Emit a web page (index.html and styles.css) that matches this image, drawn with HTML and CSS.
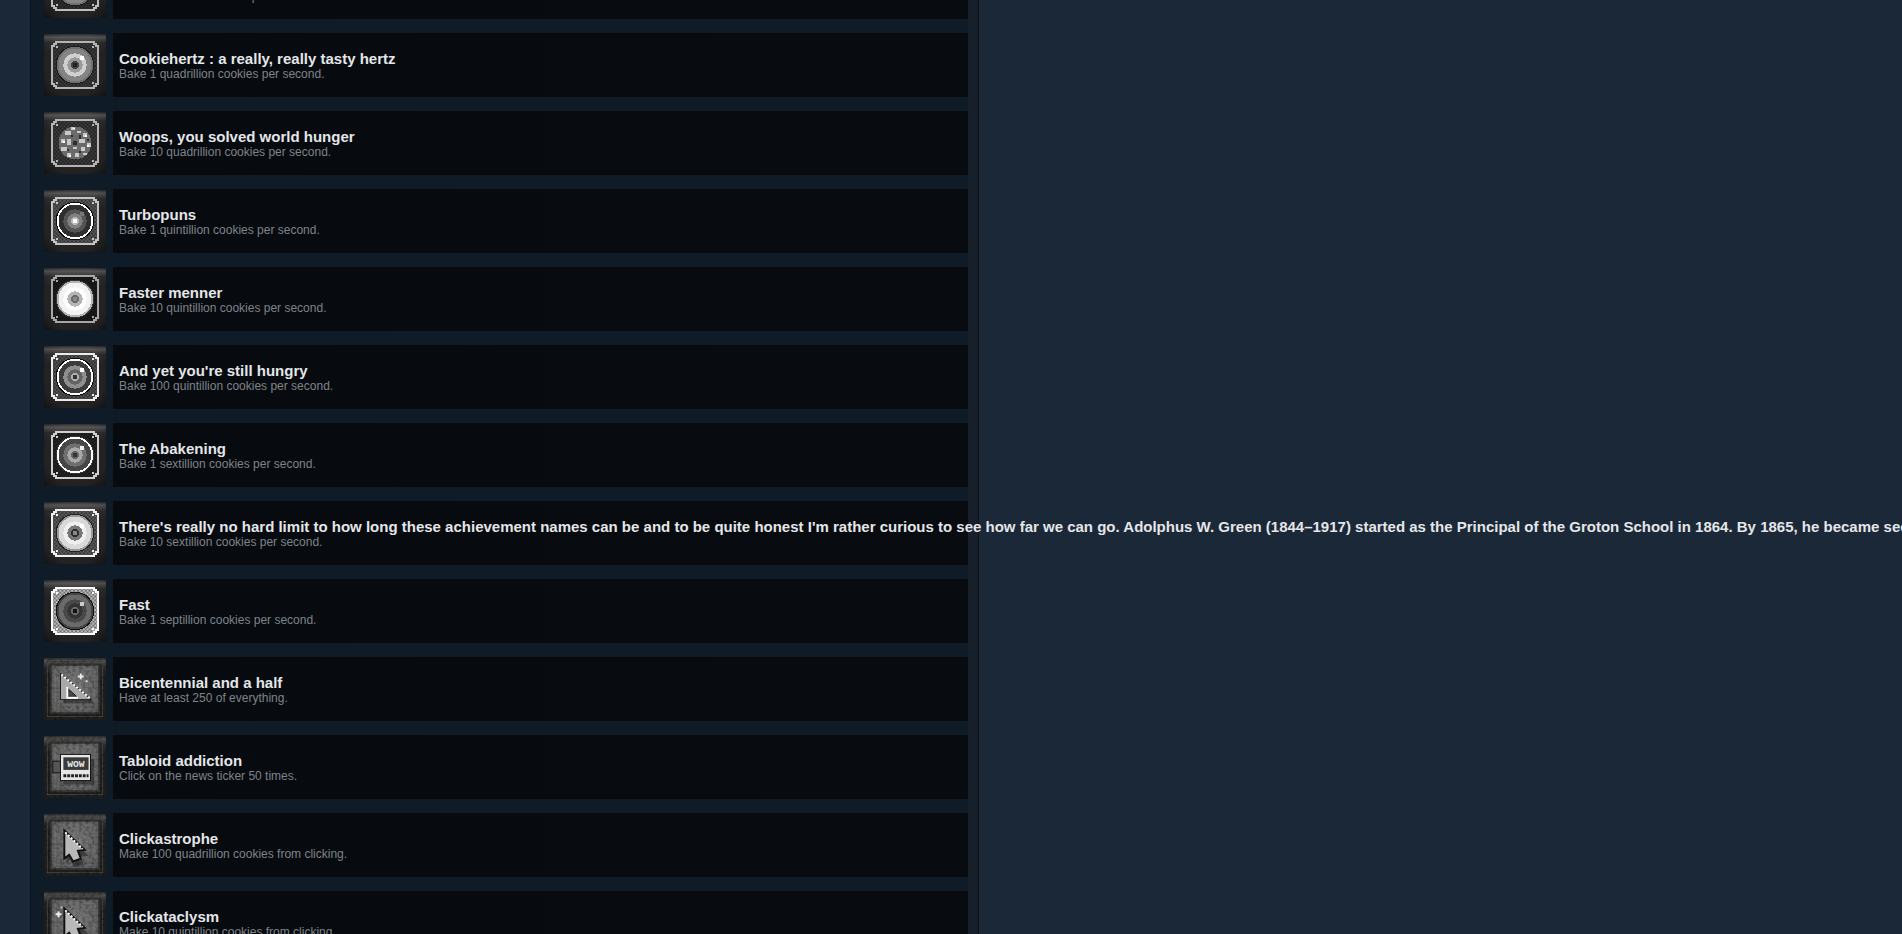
FILE: index.html
```html
<!DOCTYPE html>
<html lang="en">
<head>
    <meta charset="UTF-8">
    <title>Cookie Clicker Achievements</title>
    <link rel="stylesheet" href="styles.css">
</head>
<body>

    <!-- shared icon parts -->
    <svg class="defs" width="0" height="0">
        <defs>
            <radialGradient id="tileShade" cx="0.5" cy="0.5" r="0.72">
                <stop offset="0" stop-color="#262524"/>
                <stop offset="0.7" stop-color="#232221"/>
                <stop offset="1" stop-color="#0f1114"/>
            </radialGradient>
            <linearGradient id="tileGlow" x1="0" y1="0" x2="0" y2="1">
                <stop offset="0" stop-color="#fff" stop-opacity="0.06"/>
                <stop offset="0.05" stop-color="#fff" stop-opacity="0.24"/>
                <stop offset="0.14" stop-color="#fff" stop-opacity="0.06"/>
                <stop offset="0.3" stop-color="#fff" stop-opacity="0"/>
            </linearGradient>
            <radialGradient id="bevelShade" cx="0.5" cy="0.45" r="0.7">
                <stop offset="0" stop-color="#808080"/>
                <stop offset="1" stop-color="#5a5a5a"/>
            </radialGradient>
            <pattern id="checker" width="4" height="4" patternUnits="userSpaceOnUse">
                <rect width="2" height="2" fill="#000" fill-opacity="0.45"/>
                <rect x="2" y="2" width="2" height="2" fill="#000" fill-opacity="0.45"/>
            </pattern>
            <filter id="grain" x="0" y="0" width="100%" height="100%">
                <feTurbulence type="fractalNoise" baseFrequency="0.3" numOctaves="2" seed="4"/>
                <feColorMatrix values="0 0 0 0 0  0 0 0 0 0  0 0 0 0 0  0 0 0 0.7 -0.27"/>
            </filter>

            <symbol id="tile" viewBox="0 0 64 64">
                <rect width="64" height="64" fill="url(#tileShade)"/>
                <rect width="64" height="64" fill="url(#tileGlow)"/>
                <path class="field" d="M12 8h40v2h2v2h2v40h-2v2h-2v2H12v-2h-2v-2H8V12h2v-2h2z"/>
                <path fill="url(#checker)" d="M12 8h40v2h2v2h2v40h-2v2h-2v2H12v-2h-2v-2H8V12h2v-2h2z"/>
                <path class="frame" d="M12 8h40v2h2v2h2v40h-2v2h-2v2H12v-2h-2v-2H8V12h2v-2h2z"/>
                <g class="frame-dots">
                    <rect x="12" y="12" width="2" height="2"/><rect x="50" y="12" width="2" height="2"/>
                    <rect x="12" y="50" width="2" height="2"/><rect x="50" y="50" width="2" height="2"/>
                </g>
            </symbol>

            <symbol id="disc" viewBox="0 0 64 64" shape-rendering="crispEdges">
                <use href="#tile"/>
                <circle class="d-out" cx="32" cy="32" r="20"/>
                <circle class="d-rim" cx="32" cy="32" r="19"/>
                <circle class="d-body" cx="32" cy="32" r="17"/>
                <circle class="d-ring" cx="32" cy="32" r="12"/>
                <circle class="d-inner" cx="32" cy="32" r="8"/>
                <circle class="d-hole" cx="32" cy="32" r="4"/>
                <rect class="d-core" x="30" y="30" width="4" height="4"/>
                <rect class="d-spark" x="37" y="23" width="4" height="4"/>
            </symbol>

            <symbol id="crumbs" viewBox="0 0 64 64" shape-rendering="crispEdges">
                <use href="#tile"/>
                <circle cx="32" cy="32" r="17" fill="#6a6a6a"/>
                <g fill="#c9c9c9">
                    <rect x="28" y="15" width="4" height="4"/><rect x="22" y="20" width="6" height="4"/>
                    <rect x="34" y="20" width="4" height="2"/><rect x="40" y="22" width="4" height="4"/>
                    <rect x="18" y="28" width="4" height="4"/><rect x="24" y="28" width="4" height="6"/>
                    <rect x="36" y="28" width="6" height="4"/><rect x="44" y="32" width="4" height="4"/>
                    <rect x="18" y="36" width="6" height="4"/><rect x="30" y="36" width="4" height="2"/>
                    <rect x="38" y="36" width="4" height="4"/><rect x="24" y="42" width="4" height="4"/>
                    <rect x="32" y="42" width="4" height="4"/><rect x="40" y="42" width="4" height="2"/>
                </g>
                <g fill="#2e2e2e">
                    <rect x="30" y="30" width="4" height="4"/><rect x="24" y="38" width="2" height="2"/>
                    <rect x="36" y="24" width="2" height="4"/><rect x="28" y="24" width="2" height="2"/>
                    <rect x="36" y="40" width="2" height="2"/><rect x="44" y="28" width="2" height="2"/>
                </g>
                <g fill="#fff">
                    <rect x="20" y="30" width="2" height="2"/><rect x="42" y="24" width="2" height="2"/>
                    <rect x="30" y="16" width="2" height="2"/><rect x="44" y="34" width="2" height="2"/>
                    <rect x="26" y="44" width="2" height="2"/>
                </g>
            </symbol>

            <symbol id="bevel" viewBox="0 0 64 64">
                <rect width="64" height="64" fill="#1f1f1e"/>
                <rect width="64" height="64" fill="url(#tileGlow)"/>
                <rect x="3.5" y="3.5" width="57" height="57" fill="none" stroke="#454543"/>
                <rect x="6" y="6" width="52" height="52" fill="#343433"/>
                <rect x="8" y="8" width="48" height="48" fill="url(#bevelShade)"/>
                <rect x="11.5" y="11.5" width="41" height="41" fill="none" stroke="#999" stroke-opacity="0.3"/>
                <rect width="64" height="64" filter="url(#grain)"/>
            </symbol>

            <symbol id="pointer" viewBox="0 0 64 64">
                <path d="M24 22 46 43 38 44 41 53 31 55 27 47 23 51z" fill="#000" fill-opacity="0.4"/>
                <path d="M21 17 42 37 35 38 38 46 30 49 26 42 21 46z" fill="#b9b9b9" stroke="#111" stroke-width="2"/>
                <path d="M22 19 40 36" fill="none" stroke="#fff" stroke-width="2" stroke-dasharray="2 2"/>
            </symbol>
        </defs>
    </svg>

    <div class="achievements">

        <div class="row">
            <svg class="icon disc-trillion"><use href="#disc"/></svg>
            <div class="row-text">
                <h3>&nbsp;</h3>
                <h5>Bake 100 trillion cookies per second.</h5>
            </div>
        </div>

        <div class="row">
            <svg class="icon disc-hertz"><use href="#disc"/></svg>
            <div class="row-text">
                <h3>Cookiehertz : a really, really tasty hertz</h3>
                <h5>Bake 1 quadrillion cookies per second.</h5>
            </div>
        </div>

        <div class="row">
            <svg class="icon disc-woops"><use href="#crumbs"/></svg>
            <div class="row-text">
                <h3>Woops, you solved world hunger</h3>
                <h5>Bake 10 quadrillion cookies per second.</h5>
            </div>
        </div>

        <div class="row">
            <svg class="icon disc-turbo"><use href="#disc"/></svg>
            <div class="row-text">
                <h3>Turbopuns</h3>
                <h5>Bake 1 quintillion cookies per second.</h5>
            </div>
        </div>

        <div class="row">
            <svg class="icon disc-faster"><use href="#disc"/></svg>
            <div class="row-text">
                <h3>Faster menner</h3>
                <h5>Bake 10 quintillion cookies per second.</h5>
            </div>
        </div>

        <div class="row">
            <svg class="icon disc-hungry"><use href="#disc"/></svg>
            <div class="row-text">
                <h3>And yet you're still hungry</h3>
                <h5>Bake 100 quintillion cookies per second.</h5>
            </div>
        </div>

        <div class="row">
            <svg class="icon disc-abakening"><use href="#disc"/></svg>
            <div class="row-text">
                <h3>The Abakening</h3>
                <h5>Bake 1 sextillion cookies per second.</h5>
            </div>
        </div>

        <div class="row">
            <svg class="icon disc-limit"><use href="#disc"/></svg>
            <div class="row-text">
                <h3>There's really no hard limit to how long these achievement names can be and to be quite honest I'm rather curious to see how far we can go. Adolphus W. Green (1844–1917) started as the Principal of the Groton School in 1864. By 1865, he became second assistant</h3>
                <h5>Bake 10 sextillion cookies per second.</h5>
            </div>
        </div>

        <div class="row">
            <svg class="icon disc-fast"><use href="#disc"/></svg>
            <div class="row-text">
                <h3>Fast</h3>
                <h5>Bake 1 septillion cookies per second.</h5>
            </div>
        </div>

        <div class="row">
            <svg class="icon" viewBox="0 0 64 64">
                <use href="#bevel"/>
                <path d="M20 19 52 47H20z" fill="#000" fill-opacity="0.35"/>
                <path fill-rule="evenodd" d="M17 16 49 43H17zM24 31V40H34z" fill="#a9a9a9" stroke="#161616"/>
                <path d="M18 17 48 42" fill="none" stroke="#fff" stroke-width="2" stroke-dasharray="2 2"/>
                <path d="M24 30V41H35" fill="none" stroke="#fff" stroke-width="2"/>
                <path d="M35 18h2v-2h2v2h2v2h-2v2h-2v-2h-2z" fill="#e8e8e8"/>
                <rect x="43" y="23" width="2" height="2" fill="#ddd"/>
            </svg>
            <div class="row-text">
                <h3>Bicentennial and a half</h3>
                <h5>Have at least 250 of everything.</h5>
            </div>
        </div>

        <div class="row">
            <svg class="icon" viewBox="0 0 64 64">
                <use href="#bevel"/>
                <rect x="20" y="24" width="32" height="26" fill="#000" fill-opacity="0.35"/>
                <rect x="9" y="26" width="9" height="12" fill="#555" stroke="#111"/>
                <rect x="17" y="19" width="31" height="27" fill="#e6e6e6" stroke="#111"/>
                <rect x="20" y="22" width="26" height="13" fill="#3a3a3a"/>
                <text class="wow" x="33" y="32.5">WOW</text>
                <path d="M20 41h26" stroke="#222" stroke-width="3" stroke-dasharray="3 1" fill="none"/>
            </svg>
            <div class="row-text">
                <h3>Tabloid addiction</h3>
                <h5>Click on the news ticker 50 times.</h5>
            </div>
        </div>

        <div class="row">
            <svg class="icon" viewBox="0 0 64 64">
                <use href="#bevel"/>
                <use href="#pointer"/>
            </svg>
            <div class="row-text">
                <h3>Clickastrophe</h3>
                <h5>Make 100 quadrillion cookies from clicking.</h5>
            </div>
        </div>

        <div class="row">
            <svg class="icon" viewBox="0 0 64 64">
                <use href="#bevel"/>
                <use href="#pointer"/>
                <path d="M12 22h2v-2h2v2h2v2h-2v2h-2v-2h-2z" fill="#eee"/>
                <rect x="17" y="15" width="2" height="2" fill="#bbb"/>
            </svg>
            <div class="row-text">
                <h3>Clickataclysm</h3>
                <h5>Make 10 quintillion cookies from clicking.</h5>
            </div>
        </div>

    </div>

</body>
</html>
```

FILE: styles.css
```css
html, body {
    height: 100%;
}
body {
    margin: 0;
    overflow: hidden;
    background-color: #1b2838;
    font-family: "Liberation Sans", Arial, sans-serif;
}
.defs {
    display: block;
}
.achievements {
    width: 924px;
    margin-top: -45px;
    margin-left: 30px;
    padding-left: 13px;
    border-left: 1px solid #0b1119;
    border-right: 10px solid #171f2b;
    box-shadow: 1px 0 0 #0b1119;
    background: #101b28;
}
.row {
    display: flex;
    align-items: stretch;
    height: 64px;
    margin-bottom: 14px;
}
.icon {
    flex: none;
    align-self: center;
    width: 62px;
    height: 62px;
    margin-right: 7px;
}
.row-text {
    flex: 1;
    min-width: 0;
    padding: 17px 0 0 6px;
    background: linear-gradient(to right, #070b10, #080b10);
}
.row-text h3 {
    margin: 0;
    font-size: 15px;
    line-height: 17px;
    font-weight: bold;
    color: #e4e6e8;
    white-space: nowrap;
}
.row-text h5 {
    margin: 0;
    font-size: 12px;
    line-height: 14px;
    font-weight: normal;
    color: #7f8388;
    white-space: nowrap;
}

/* disc icon parts, coloured per achievement */
.field { fill: var(--field, #3c3c3c); }
.frame { fill: none; stroke: var(--frame, #aaa); stroke-width: 2; }
.frame-dots { fill: var(--frame, #aaa); }
.d-out { fill: var(--out, #1c1c1c); }
.d-rim { fill: var(--rim, #6f6f6f); }
.d-body { fill: var(--body, #858585); }
.d-ring { fill: var(--ring, #cfcfcf); }
.d-inner { fill: var(--inner, #9a9a9a); }
.d-hole { fill: var(--hole, #444); }
.d-core { fill: var(--core, #222); }
.d-spark { fill: var(--spark, #fff); }
.wow {
    font-family: "Liberation Mono", monospace;
    font-size: 10px;
    font-weight: bold;
    text-anchor: middle;
    fill: #e6e6e6;
}

.disc-trillion { --frame: #bdbdbd; --field: #333; }
.disc-hertz { --frame: #b4b4b4; --field: #3e3e3e; }
.disc-woops { --frame: #b4b4b4; --field: #3e3e3e; }
.disc-turbo { --frame: #c4c4c4; --field: #5c5c5c; --out: #0a0a0a; --rim: #fff; --body: #2f2f2f; --ring: #555; --inner: #808080; --hole: #b8b8b8; --core: #fff; --spark: #777; }
.disc-faster { --frame: #a6a6a6; --field: #1d1d1d; --out: #333; --rim: #b5b5b5; --body: #f2f2f2; --ring: #fff; --inner: #b5b5b5; --hole: #6a6a6a; --core: #888; --spark: #fff; }
.disc-hungry { --frame: #ececec; --field: #565656; --out: #0d0d0d; --rim: #fff; --body: #3c3c3c; --ring: #8e8e8e; --inner: #636363; --hole: #b0b0b0; --core: #333; }
.disc-abakening { --frame: #cfcfcf; --field: #262626; --out: #333; --rim: #fff; --body: #474747; --ring: #6f6f6f; --inner: #a8a8a8; --hole: #666; --core: #333; --spark: #eee; }
.disc-limit { --frame: #efefef; --field: #606060; --out: #222; --rim: #999; --body: #d9d9d9; --ring: #efefef; --inner: #777; --hole: #2b2b2b; --core: #888; }
.disc-fast { --frame: #fbfbfb; --field: #c2c2c2; --out: #111; --rim: #444; --body: #6a6a6a; --ring: #484848; --inner: #333; --hole: #6a6a6a; --core: #111; --spark: #ccc; }
```
